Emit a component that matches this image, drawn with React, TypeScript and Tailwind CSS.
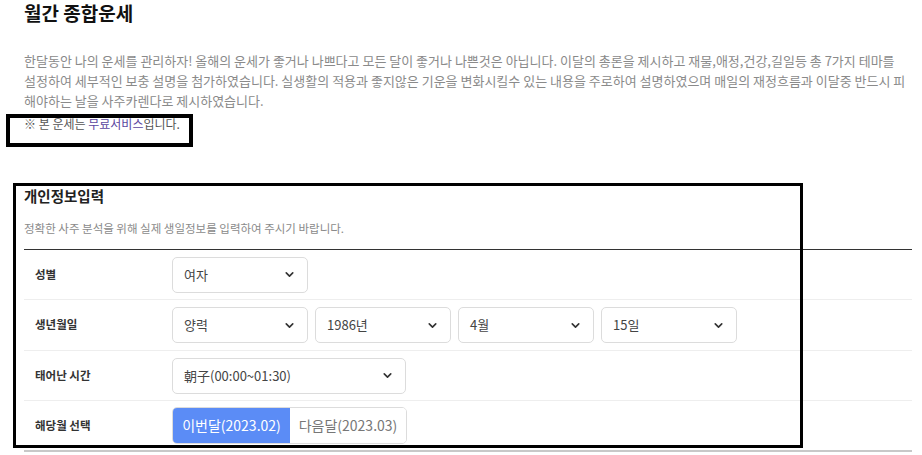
import React from 'react';
import { ChevronDown } from 'lucide-react';

const font = { fontFamily: '"Noto Sans CJK KR", "Noto Sans", sans-serif' };

const Select: React.FC<{ value: string; width?: string }> = ({ value, width = 'w-[136px]' }) => (
  <div className={`${width} h-[36px] flex items-center justify-between pl-[11px] pr-[11px] border border-[#dcdcdc] rounded-[5px] bg-white text-[13px] text-[#444]`}>
    <span>{value}</span>
    <ChevronDown size={13} strokeWidth={3} className="text-[#333]" />
  </div>
);

const Row: React.FC<{ label: string; tall?: boolean; last?: boolean; children: React.ReactNode }> = ({ label, tall, last, children }) => (
  <div className={`flex items-center ${tall ? 'h-[51px]' : 'h-[50px]'} border-b ${last ? 'border-[#c8c8c8] border-b-2' : 'border-[#eeeeee]'}`}>
    <div className="w-[148px] pl-[11px] text-[11.5px] font-bold text-[#333]">{label}</div>
    <div className="flex items-center gap-[7px]">{children}</div>
  </div>
);

export default function App() {
  return (
    <div className="relative w-[922px] h-[455px] overflow-hidden bg-white pl-[24px] pr-[10px]" style={font}>
      <h2 className="pt-[1px] text-[19px] leading-[24px] font-bold text-[#111]">월간 종합운세</h2>

      <p className="mt-[26px] text-[13px] leading-[20px] text-[#8a8a8a] whitespace-nowrap">
        한달동안 나의 운세를 관리하자! 올해의 운세가 좋거나 나쁘다고 모든 달이 좋거나 나쁜것은 아닙니다. 이달의 총론을 제시하고 재물,애정,건강,길일등 총 7가지 테마를
        <br />
        설정하여 세부적인 보충 설명을 첨가하였습니다. 실생활의 적용과 좋지않은 기운을 변화시킬수 있는 내용을 주로하여 설명하였으며 매일의 재정흐름과 이달중 반드시 피
        <br />
        해야하는 날을 사주카렌다로 제시하였습니다.
      </p>
      <p className="mt-[4px] text-[12px] leading-[18px] text-[#555]">
        ※ 본 운세는 <span className="text-[#5b46a0]">무료서비스</span>입니다.
      </p>

      <h3 className="mt-[53px] text-[14.5px] leading-[20px] font-bold text-[#222]">개인정보입력</h3>
      <p className="mt-[14px] text-[11.5px] leading-[16px] text-[#8a8a8a]">정확한 사주 분석을 위해 실제 생일정보를 입력하여 주시기 바랍니다.</p>

      <div className="mt-[13px] border-t border-[#333]">
        <Row label="성별">
          <Select value="여자" />
        </Row>
        <Row label="생년월일" tall>
          <Select value="양력" />
          <Select value="1986년" />
          <Select value="4월" />
          <Select value="15일" />
        </Row>
        <Row label="태어난 시간">
          <Select value="朝子(00:00~01:30)" width="w-[234px]" />
        </Row>
        <Row label="해당월 선택" tall last>
          <div className="flex h-[37px] rounded-[5px] overflow-hidden border border-[#dcdcdc] text-[14px]">
            <div className="w-[117px] flex items-center justify-center bg-[#5b8cf6] text-white">이번달(2023.02)</div>
            <div className="w-[116px] flex items-center justify-center bg-white text-[#777]">다음달(2023.03)</div>
          </div>
        </Row>
      </div>

      <div className="absolute left-[6px] top-[114px] w-[187px] h-[33px] border-[4px] border-black pointer-events-none" />
      <div className="absolute left-[13px] top-[183px] w-[790px] h-[265px] border-[3px] border-black pointer-events-none" />
    </div>
  );
}
